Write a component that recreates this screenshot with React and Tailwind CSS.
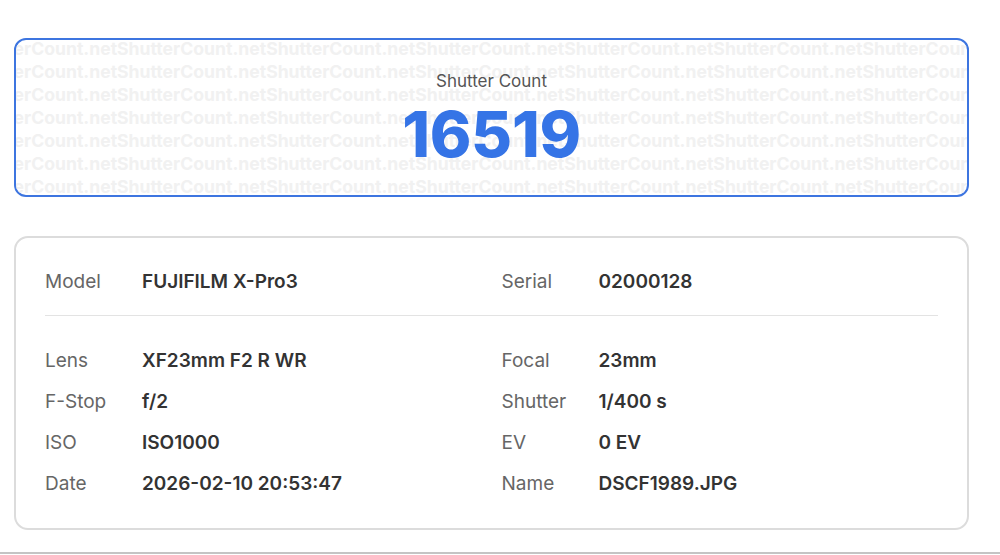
import React from 'react';

const rows = [
  [['Lens', 'XF23mm F2 R WR'], ['Focal', '23mm']],
  [['F-Stop', 'f/2'], ['Shutter', '1/400 s']],
  [['ISO', 'ISO1000'], ['EV', '0 EV']],
  [['Date', '2026-02-10 20:53:47'], ['Name', 'DSCF1989.JPG']],
];

const Field = ({ label, value }) => (
  <div className="flex items-center h-[26px]">
    <span className="w-[97px] shrink-0 text-[#666]">{label}</span>
    <span className="font-semibold text-[#333]">{value}</span>
  </div>
);

const Watermark = () => (
  <div className="absolute inset-0 overflow-hidden select-none pointer-events-none">
    <div className="-mt-[3.5px] -ml-[48px]">
      {Array.from({ length: 8 }).map((_, i) => (
        <div
          key={i}
          className="whitespace-nowrap h-[23px] leading-[23px] text-[17.6px] font-bold text-[#f1f1f1]"
        >
          {'ShutterCount.net'.repeat(8)}
        </div>
      ))}
    </div>
  </div>
);

export default function App() {
  return (
    <div className="bg-white h-[555px] w-[1000px] flex flex-col font-['Inter',sans-serif]">
      <div className="px-[14px] pt-[38px] flex-1">
        <div className="relative h-[159px] w-[955px] rounded-[12px] border-2 border-[#3d75e0] overflow-hidden">
          <Watermark />
          <div className="relative flex flex-col items-center pt-[30px]">
            <div className="text-[17px] leading-[22px] text-[#555]">Shutter Count</div>
            <div className="text-[63px] leading-[64px] font-extrabold text-[#3574e6] tracking-[-0.3px] mt-[10px]">
              16519
            </div>
          </div>
        </div>

        <div className="mt-[39px] w-[955px] rounded-[14px] border-2 border-[#dcdcdc] px-[29px] pt-[31px] pb-[31px] text-[19px]">
          <div className="grid grid-cols-2 gap-x-5">
            <Field label="Model" value="FUJIFILM X-Pro3" />
            <Field label="Serial" value="02000128" />
          </div>
          <div className="h-px bg-[#e3e3e3] mt-[20px] mb-[32px]" />
          <div className="grid grid-cols-2 gap-x-5 gap-y-[15px]">
            {rows.map((r) => (
              <React.Fragment key={r[0][0]}>
                <Field label={r[0][0]} value={r[0][1]} />
                <Field label={r[1][0]} value={r[1][1]} />
              </React.Fragment>
            ))}
          </div>
        </div>
      </div>
      <div className="h-[2px] bg-[#c4c4c4] mb-px" />
    </div>
  );
}
